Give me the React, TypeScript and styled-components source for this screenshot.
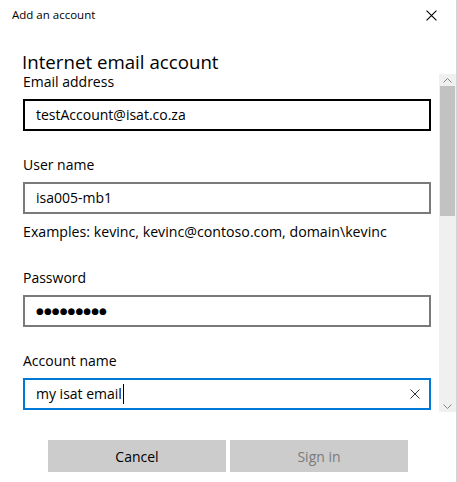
import styled, { createGlobalStyle } from 'styled-components';

const GlobalStyle = createGlobalStyle`
    html, body {
        margin: 0;
        padding: 0;
        background: #ffffff;
    }
    body {
        font-family: 'Open Sans', 'Noto Sans', sans-serif;
        color: #000000;
    }
`;

interface FieldInfo {
    label: string;
    value: string;
    tone: 'hover' | 'rest' | 'focus';
    secret?: boolean;
    hint?: string;
}

const fields: FieldInfo[] = [
    { label: 'Email address', value: 'testAccount@isat.co.za', tone: 'hover' },
    {
        label: 'User name',
        value: 'isa005-mb1',
        tone: 'rest',
        hint: 'Examples: kevinc, kevinc@contoso.com, domain\\kevinc',
    },
    { label: 'Password', value: '●●●●●●●●●', tone: 'rest', secret: true },
    { label: 'Account name', value: 'my isat email', tone: 'focus' },
];

const borderFor = {
    hover: '#000000',
    rest: '#7a7a7a',
    focus: '#0078d7',
};

const CloseIcon = ({ size, color }: { size: number; color: string }) => (
    <svg width={size} height={size} viewBox="0 0 10 10">
        <path d="M0.5 0.5 L9.5 9.5 M9.5 0.5 L0.5 9.5" stroke={color} strokeWidth="1" fill="none" />
    </svg>
);

const Chevron = ({ up }: { up?: boolean }) => (
    <svg width="9" height="5" viewBox="0 0 9 5">
        <path
            d={up ? 'M0.5 4.5 L4.5 0.5 L8.5 4.5' : 'M0.5 0.5 L4.5 4.5 L8.5 0.5'}
            stroke="#858585"
            strokeWidth="1"
            fill="none"
        />
    </svg>
);

const App = () => {
    return (
        <Window>
            <GlobalStyle />
            <TitleBar>
                <TitleText>Add an account</TitleText>
                <CloseButton>
                    <CloseIcon size={11} color="#000000" />
                </CloseButton>
            </TitleBar>
            <Heading>Internet email account</Heading>
            <Main>
                <Content>
                    {fields.map((f) => (
                        <Field key={f.label}>
                            <Label>{f.label}</Label>
                            <InputBox $border={borderFor[f.tone]}>
                                {f.secret ? (
                                    <Dots>{f.value}</Dots>
                                ) : (
                                    <InputText>{f.value}</InputText>
                                )}
                                {f.tone === 'focus' && <Caret />}
                                {f.tone === 'focus' && (
                                    <ClearButton>
                                        <CloseIcon size={10} color="#333333" />
                                    </ClearButton>
                                )}
                            </InputBox>
                            {f.hint && <Hint>{f.hint}</Hint>}
                        </Field>
                    ))}
                </Content>
                <Scrollbar>
                    <ArrowCell>
                        <Chevron up />
                    </ArrowCell>
                    <Thumb />
                    <Track />
                    <ArrowCell>
                        <Chevron />
                    </ArrowCell>
                </Scrollbar>
            </Main>
            <Footer>
                <Button>Cancel</Button>
                <Button $disabled>Sign in</Button>
            </Footer>
        </Window>
    );
};

const Window = styled.div`
    width: 457px;
    height: 482px;
    box-sizing: border-box;
    border-right: 1px solid #d4d4d4;
    display: flex;
    flex-direction: column;
    overflow: hidden;
`;

const TitleBar = styled.div`
    height: 30px;
    display: flex;
    align-items: center;
    justify-content: space-between;
    padding: 0 19px 0 12px;
`;

const TitleText = styled.div`
    font-size: 11.5px;
    line-height: 16px;
`;

const CloseButton = styled.div`
    display: flex;
    align-items: center;
    margin-top: 1px;
`;

const Heading = styled.div`
    margin: 23px 0 0 22px;
    font-size: 18.7px;
    line-height: 18px;
`;

const Main = styled.div`
    height: 341px;
    display: flex;
`;

const Content = styled.div`
    flex: 1;
    padding: 1px 8px 0 23px;
    display: flex;
    flex-direction: column;
    gap: 24px;
    overflow: hidden;
`;

const Field = styled.div`
    display: flex;
    flex-direction: column;
`;

const Label = styled.div`
    font-size: 14px;
    line-height: 20px;
    margin-bottom: 7px;
`;

const InputBox = styled.div<{ $border: string }>`
    position: relative;
    height: 32px;
    box-sizing: border-box;
    border: 2px solid ${({ $border }) => $border};
    display: flex;
    align-items: center;
    padding: 0 11px;
`;

const InputText = styled.span`
    font-size: 14px;
    line-height: 20px;
    white-space: nowrap;
`;

const Dots = styled.span`
    font-family: 'DejaVu Sans', sans-serif;
    font-size: 8.8px;
    letter-spacing: 0.2px;
    line-height: 20px;
`;

const Caret = styled.span`
    width: 1px;
    height: 20px;
    background: #000000;
    margin-left: 1px;
`;

const ClearButton = styled.div`
    position: absolute;
    right: 9px;
    top: 9px;
    display: flex;
`;

const Hint = styled.div`
    font-size: 14.2px;
    line-height: 20px;
    margin: 8px 0 2px;
`;

const Scrollbar = styled.div`
    width: 17px;
    margin-top: 3px;
    background: #f0f0f0;
    display: flex;
    flex-direction: column;
`;

const ArrowCell = styled.div`
    height: 12px;
    display: flex;
    align-items: center;
    justify-content: center;
`;

const Thumb = styled.div`
    height: 130px;
    margin: 0 1px;
    background: #c2c2c2;
`;

const Track = styled.div`
    flex: 1;
`;

const Footer = styled.div`
    display: flex;
    justify-content: center;
    gap: 4px;
    padding-top: 28px;
`;

const Button = styled.div<{ $disabled?: boolean }>`
    width: 178px;
    height: 32px;
    background: #cccccc;
    display: flex;
    align-items: center;
    justify-content: center;
    font-size: 14px;
    color: ${({ $disabled }) => ($disabled ? '#7a7a7a' : '#000000')};
`;

export default App;
